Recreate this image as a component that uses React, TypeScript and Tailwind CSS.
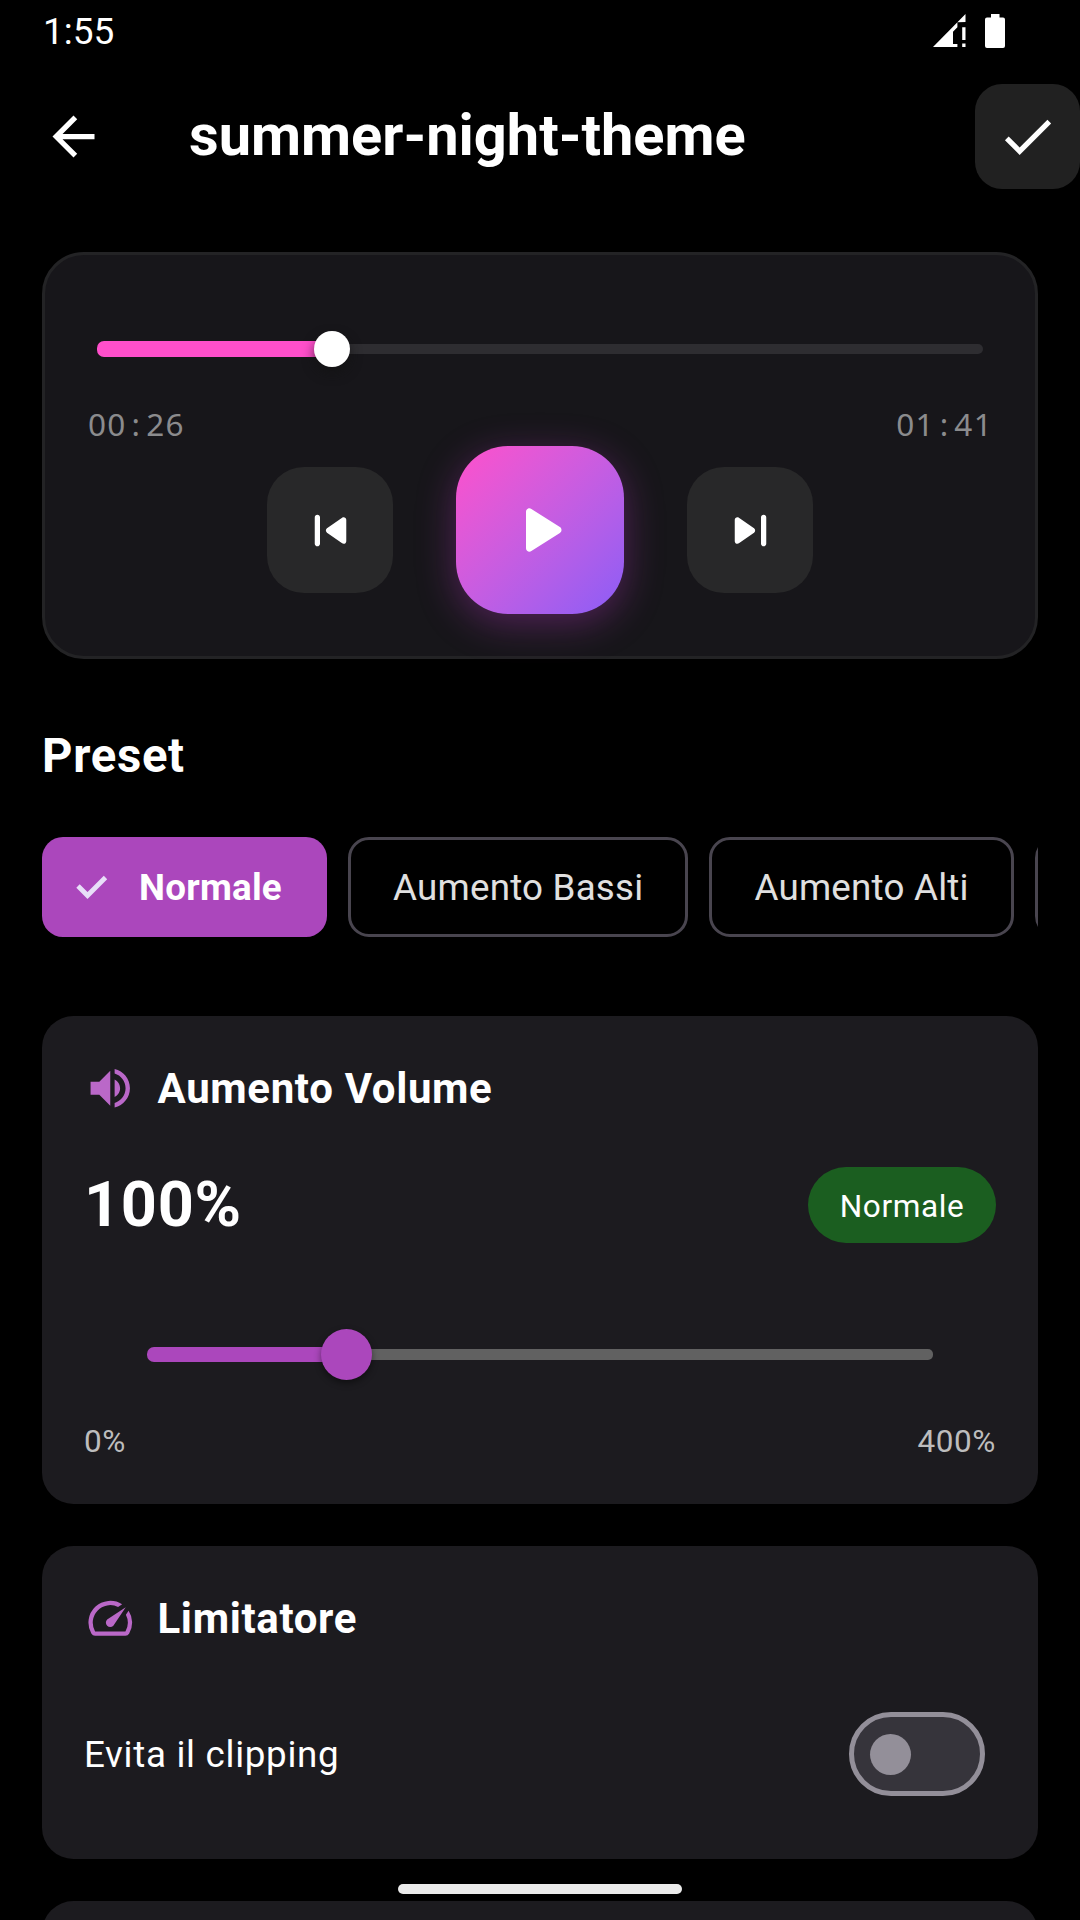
import type { ReactNode } from 'react';

const PRESETS = ['Aumento Bassi', 'Aumento Alti'];

type IconProps = { d: string; className: string };

function Icon({ d, className }: IconProps) {
  return (
    <svg viewBox="0 0 24 24" fill="currentColor" className={`shrink-0 ${className}`}>
      <path d={d} />
    </svg>
  );
}

const ICONS = {
  back: 'M20 11H7.83l5.59-5.59L12 4l-8 8 8 8 1.41-1.41L7.83 13H20v-2z',
  check: 'M9 16.17 4.83 12l-1.42 1.41L9 19 21 7l-1.41-1.41z',
  previous:
    'M7 6c.55 0 1 .45 1 1v10c0 .55-.45 1-1 1s-1-.45-1-1V7c0-.55.45-1 1-1m3.66 6.82 5.77 4.07c.66.47 1.58-.01 1.58-.82V7.93c0-.81-.91-1.28-1.58-.82l-5.77 4.07c-.57.4-.57 1.24 0 1.64',
  next: 'm7.58 16.89 5.77-4.07c.56-.4.56-1.24 0-1.63L7.58 7.11C6.91 6.65 6 7.12 6 7.93v8.14c0 .81.91 1.28 1.58.82M16 7v10c0 .55.45 1 1 1s1-.45 1-1V7c0-.55-.45-1-1-1s-1 .45-1 1',
  play: 'M8 6.82v10.36c0 .79.87 1.27 1.54.84l8.14-5.18c.62-.39.62-1.29 0-1.69L9.54 5.98C8.87 5.55 8 6.03 8 6.82',
  volume:
    'M3 9v6h4l5 5V4L7 9H3zm13.5 3c0-1.77-1.02-3.29-2.5-4.03v8.05c1.48-.73 2.5-2.25 2.5-4.02zM14 3.23v2.06c2.89.86 5 3.54 5 6.71s-2.11 5.85-5 6.71v2.06c4.01-.91 7-4.49 7-8.77s-2.99-7.86-7-8.77z',
  speed:
    'm20.38 8.57-1.23 1.85a8 8 0 0 1-.22 7.58H5.07A8 8 0 0 1 15.58 6.85l1.85-1.23A10 10 0 0 0 3.35 19a2 2 0 0 0 1.72 1h13.85a2 2 0 0 0 1.74-1 10 10 0 0 0-.27-10.44zm-9.79 6.84a2 2 0 0 0 2.83 0l5.66-8.49-8.49 5.66a2 2 0 0 0 0 2.83z',
};

function StatusBar() {
  return (
    <div className="flex h-[63px] shrink-0 items-start justify-between pt-[9px] pr-[75px] pl-[43px]">
      <span className="pt-px text-[37px] leading-[44px]">1:55</span>
      <div className="flex items-center gap-[19px] pt-[5px]">
        <svg viewBox="0 0 33 34" fill="currentColor" className="h-[34px] w-[33px]">
          <path d="M0 33 24.400 8.300V13.300L20 17.700V30H24.400V33zM24.400 8.300 32.500 0V8z" />
          <path d="M29.200 13.300h3.300V26h-3.300zM29.200 29.500h3.300V33h-3.300z" />
        </svg>
        <svg viewBox="0 0 20 34" fill="currentColor" className="h-[34px] w-[20px]">
          <path d="M6 0h8.500v3.500H18a2 2 0 0 1 2 2V32a2 2 0 0 1-2 2H2a2 2 0 0 1-2-2V5.500a2 2 0 0 1 2-2h4z" />
        </svg>
      </div>
    </div>
  );
}

function Header() {
  return (
    <header className="flex h-[147px] shrink-0 items-center pl-[42px]">
      <Icon d={ICONS.back} className="size-[63px]" />
      <h1 className="mb-[3px] ml-[84px] flex-1 text-[57.75px] leading-[70px] font-bold">summer-night-theme</h1>
      <button className="flex size-[105px] items-center justify-center rounded-[27px] bg-[#212121]">
        <Icon d={ICONS.check} className="size-[63px]" />
      </button>
    </header>
  );
}

function Time({ minutes, seconds }: { minutes: string; seconds: string }) {
  return (
    <span className="flex font-['Noto_Sans',sans-serif] text-[31.5px] leading-[42px] tracking-[1.3px] text-[#8b8b8d]">
      {minutes}
      <span className="w-[19.6px] text-center">:</span>
      {seconds}
    </span>
  );
}

function Player() {
  return (
    <section className="h-[407px] shrink-0 rounded-[42px] border-3 border-[#232325] bg-[#17161a] px-[42px]">
      <div className="relative mx-[10px] mt-[76px] flex h-9 items-center">
        <div className="h-4 w-[235px] rounded-l-[7px] bg-[#ff4fcb]" />
        <div className="h-[10px] flex-1 rounded-r-[5px] bg-[#2e2d31]" />
        <div className="absolute left-[217px] size-9 rounded-full bg-white shadow-[0_6px_12px_rgba(18,18,18,0.7)]" />
      </div>
      <div className="mt-[36px] flex justify-between pl-px">
        <Time minutes="00" seconds="26" />
        <Time minutes="01" seconds="41" />
      </div>
      <div className="mt-px flex items-center justify-center gap-[63px]">
        <button className="flex size-[126px] items-center justify-center rounded-[37px] bg-[#282829]">
          <Icon d={ICONS.previous} className="size-[63px]" />
        </button>
        <button className="flex size-[168px] items-center justify-center rounded-[52px] bg-linear-to-br from-[#ff4fcb] to-[#8b5cf6] shadow-[0_9px_38px_rgba(200,60,210,0.34)]">
          <Icon d={ICONS.play} className="size-[84px]" />
        </button>
        <button className="flex size-[126px] items-center justify-center rounded-[37px] bg-[#282829]">
          <Icon d={ICONS.next} className="size-[63px]" />
        </button>
      </div>
    </section>
  );
}

function Presets() {
  return (
    <div className="mt-[42px] flex h-[100px] shrink-0 gap-[21px] overflow-hidden text-[36.75px] whitespace-nowrap">
      <div className="flex w-[285px] shrink-0 items-center rounded-[21px] bg-[#ab47bc] pl-[34px] font-bold">
        <svg viewBox="0 0 32 24" className="mr-[31px] h-6 w-8 text-[#e8def8]" fill="none" stroke="currentColor" strokeWidth="4.8">
          <path d="m2 11 9.500 9.500L29.500 2.500" />
        </svg>
        <span className="pt-0.5 tracking-[0.25px]">Normale</span>
      </div>
      {PRESETS.map((preset) => (
        <div
          key={preset}
          className="flex shrink-0 items-center rounded-[21px] border-3 border-[#49454f] px-[42px] pt-0.5 tracking-[0.22px] text-[#e0e0e0]"
        >
          {preset}
        </div>
      ))}
      <div className="w-[260px] shrink-0 rounded-[21px] border-3 border-[#49454f]" />
    </div>
  );
}

type CardProps = { icon: string; title: string; className: string; children: ReactNode };

function Card({ icon, title, className, children }: CardProps) {
  return (
    <section className={`shrink-0 rounded-[31.5px] bg-[#1c1b1f] px-[42px] pt-[42px] ${className}`}>
      <div className="flex h-[61px] items-center gap-[21px]">
        <Icon d={icon} className="size-[52.5px] text-[#ba68c8]" />
        <h2 className="text-[42px] leading-[60px] font-bold tracking-[0.65px]">{title}</h2>
      </div>
      {children}
    </section>
  );
}

export default function App() {
  return (
    <div className="relative flex h-[1920px] w-[1080px] flex-col overflow-hidden bg-black font-[Roboto,sans-serif] text-white">
      <StatusBar />
      <Header />
      <main className="flex min-h-0 flex-1 flex-col overflow-hidden px-[42px] pt-[42px]">
        <Player />
        <h2 className="mt-[64px] h-[72px] shrink-0 text-[47.25px] leading-[66px] font-bold tracking-[0.7px]">Preset</h2>
        <Presets />
        <Card icon={ICONS.volume} title="Aumento Volume" className="mt-[79px] h-[488px]">
          <div className="mt-[42px] flex h-[88px] items-center justify-between">
            <span className="text-[63px] font-bold tracking-[0.7px]">100%</span>
            <span className="flex h-[76px] w-[188px] items-center justify-center rounded-full bg-[#1b5e20] pt-[3px] text-[31.5px] tracking-[0.6px]">
              Normale
            </span>
          </div>
          <div className="relative mx-[63px] mt-[79px] flex h-[52px] items-center">
            <div className="h-[15px] w-[199px] rounded-l-[7px] bg-[#ab47bc]" />
            <div className="h-[11px] flex-1 rounded-r-[5px] bg-[#616161]" />
            <div className="absolute top-px left-[173.5px] size-[51px] rounded-full bg-[#ab47bc] shadow-[0_3px_7px_rgba(0,0,0,0.45)]" />
          </div>
          <div className="mt-[41px] flex justify-between text-[31.5px] leading-[42px] tracking-[0.6px] text-[#bdbdbd]">
            <span>0%</span>
            <span>400%</span>
          </div>
        </Card>
        <Card icon={ICONS.speed} title="Limitatore" className="mt-[42px] h-[313px]">
          <div className="mt-[42px] flex h-[126px] items-center justify-between pr-[11px]">
            <span className="pt-0.5 text-[36.75px] tracking-[0.7px]">Evita il clipping</span>
            <div className="flex h-[84px] w-[136px] items-center rounded-full border-[5px] border-[#938f99] bg-[#36343b] pl-4">
              <div className="size-[41px] rounded-full bg-[#938f99]" />
            </div>
          </div>
        </Card>
        <section className="mt-[42px] h-[200px] shrink-0 rounded-[31.5px] bg-[#1c1b1f]" />
      </main>
      <div className="absolute bottom-[26px] left-[398px] h-[10px] w-[284px] rounded-full bg-[#ebebeb]" />
    </div>
  );
}
